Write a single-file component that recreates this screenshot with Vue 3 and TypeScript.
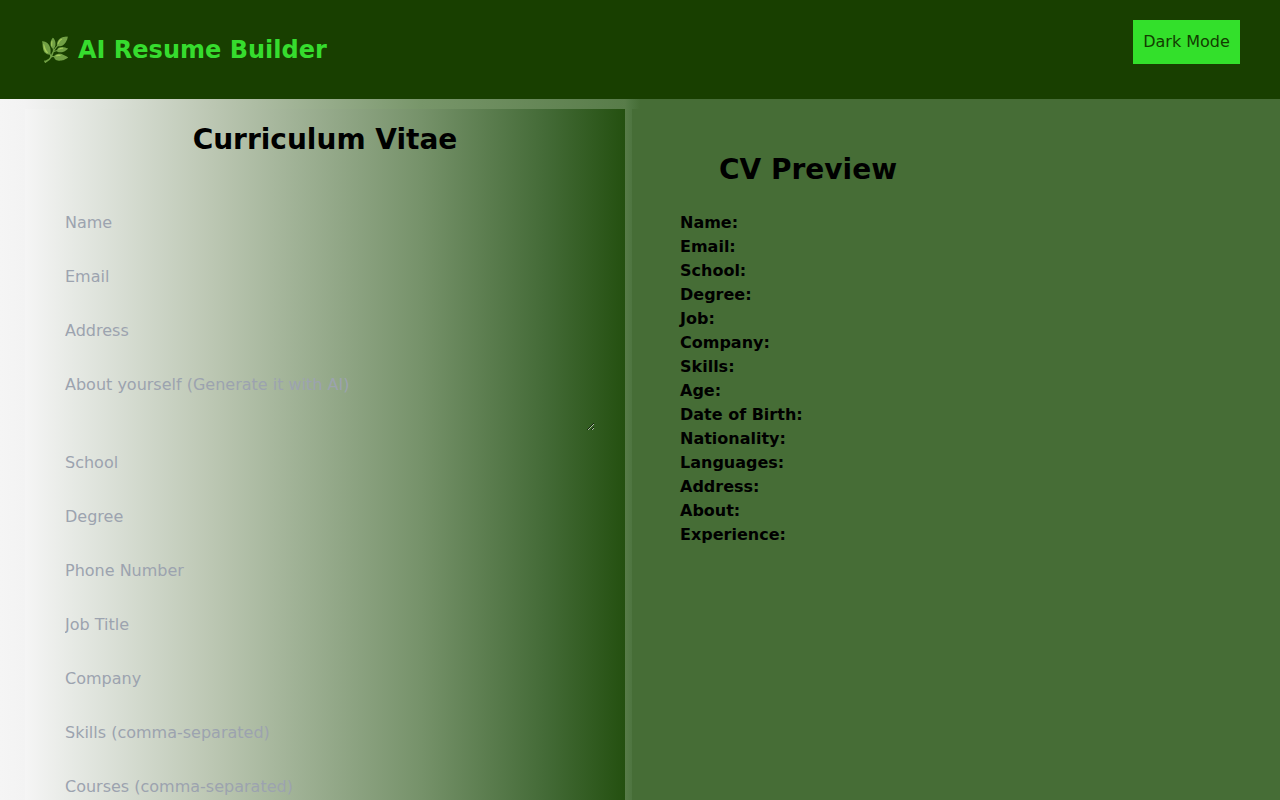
<script setup lang="ts">
const fields = ['Name', 'Email', 'Address']
const fieldsB = ['School', 'Degree', 'Phone Number', 'Job Title', 'Company', 'Skills (comma-separated)', 'Courses (comma-separated)']
const labels = ['Name:', 'Email:', 'School:', 'Degree:', 'Job:', 'Company:', 'Skills:', 'Age:', 'Date of Birth:', 'Nationality:', 'Languages:', 'Address:', 'About:', 'Experience:']
</script>

<template>
  <div class="page">
    <header class="header">
      <h1 class="brand">
        <span class="leaf">🌿</span>
        <span>AI Resume Builder</span>
      </h1>
      <button class="mode" type="button">Dark Mode</button>
    </header>
    <main class="main">
      <section class="form">
        <h2 class="form-title">Curriculum Vitae</h2>
        <input v-for="f in fields" :key="f" class="field" :placeholder="f" />
        <textarea class="field area" placeholder="About yourself (Generate it with AI)"></textarea>
        <input v-for="f in fieldsB" :key="f" class="field" :placeholder="f" />
      </section>
      <section class="preview">
        <h2 class="preview-title">CV Preview</h2>
        <p v-for="l in labels" :key="l" class="line">{{ l }}</p>
      </section>
    </main>
  </div>
</template>

<style>
html, body { margin: 0; height: 100%; overflow: hidden; }
</style>

<style scoped>
.page {
  height: 800px;
  overflow: hidden;
  font-family: "DejaVu Sans", sans-serif;
  background: #466d36;
}
.header {
  height: 99px;
  box-sizing: border-box;
  background: #183f00;
  display: flex;
  justify-content: space-between;
  align-items: flex-start;
  padding: 20px 40px;
}
.brand {
  margin: 16px 0 0;
  display: flex;
  align-items: center;
  gap: 10px;
  font-size: 24px;
  line-height: 28px;
  font-weight: 700;
  color: #36dc2e;
}
.leaf {
  width: 28px;
  font-size: 24px;
  filter: saturate(0.7) brightness(1.1);
}
.mode {
  width: 107px;
  height: 44px;
  border: 0;
  padding: 0 0 2px;
  background: #33e02b;
  color: #123d00;
  font: 16px "DejaVu Sans", sans-serif;
}
.main {
  display: flex;
  height: 701px;
  padding: 10px 0 0 25px;
  box-sizing: border-box;
  background: linear-gradient(to right, #f5f5f5 0, #f3f3f3 25px, #dde2da 105px, #bcc7b3 210px, #78966a 421px, #587c49 625px, #4e7540 632px, #466d36 640px);
}
.form {
  width: 600px;
  box-sizing: border-box;
  flex: none;
  padding: 0 30px 0;
  height: 691px;
  overflow: hidden;
  background: linear-gradient(to right, #f5f5f5 0, #dde2da 13%, #bcc7b3 31%, #76926a 66%, #436a36 87%, #245010 100%);
}
.form-title {
  margin: 14px 0 46px;
  text-align: center;
  font-size: 28px;
  line-height: 34px;
  color: #000;
}
.field {
  display: block;
  width: 100%;
  height: 38px;
  margin: 0 0 16px;
  padding: 0 10px;
  box-sizing: border-box;
  border: 0;
  outline: 0;
  background: transparent;
  font: 16px "DejaVu Sans", sans-serif;
  color: #000;
}
.field::placeholder { color: #9ca3af; opacity: 1; }
.area {
  height: 66px;
  margin-bottom: 12px;
  padding-top: 10px;
}
.preview {
  flex: 1;
  margin-left: 7px;
  padding: 0 0 0 48px;
  background: #466d36;
}
.preview-title {
  margin: 44px 0 24px 39px;
  font-size: 28px;
  line-height: 34px;
  color: #000;
}
.line {
  margin: 0;
  font-size: 16px;
  line-height: 24px;
  font-weight: 700;
  color: #000;
}
</style>
